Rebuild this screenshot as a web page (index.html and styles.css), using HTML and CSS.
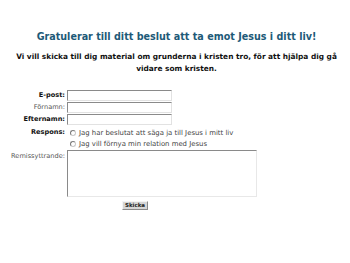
FILE: index.html
```html
<!DOCTYPE html>
<html>
<head>
<meta charset="utf-8">
<link rel="stylesheet" href="styles.css">
</head>
<body>
<div class="page">
  <h1 class="title">Gratulerar till ditt beslut att ta emot Jesus i ditt liv!</h1>
  <p class="intro">Vi vill skicka till dig material om grunderna i kristen tro, för att hjälpa dig gå vidare som kristen.</p>
  <form class="form">
    <label class="lbl bold">E-post:</label>
    <div class="ctl"><span class="field"></span></div>
    <label class="lbl">Förnamn:</label>
    <div class="ctl"><span class="field"></span></div>
    <label class="lbl bold">Efternamn:</label>
    <div class="ctl"><span class="field"></span></div>
    <label class="lbl bold resp">Respons:</label>
    <div class="ctl radios">
      <div class="radio-row"><span class="radio"></span><span>Jag har beslutat att säga ja till Jesus i mitt liv</span></div>
      <div class="radio-row"><span class="radio"></span><span>Jag vill förnya min relation med Jesus</span></div>
    </div>
    <label class="lbl rem">Remissyttrande:</label>
    <div class="ctl"><span class="area"></span></div>
    <div class="btn-row"><span class="btn">Skicka</span></div>
  </form>
</div>
</body>
</html>
```
FILE: styles.css
```css
html, body {
  margin: 0;
  padding: 0;
  background: #ffffff;
}
body {
  font-family: "DejaVu Sans", Verdana, sans-serif;
  color: #222;
}
.page {
  padding: 31px 8px 0 8px;
  width: 337px;
}
.title {
  margin: 0;
  font-size: 9.6px;
  font-weight: bold;
  color: #1d5a78;
  text-align: center;
  line-height: 12px;
}
.intro {
  margin: 8px 0 0 0;
  font-size: 7.4px;
  font-weight: bold;
  color: #111;
  text-align: center;
  line-height: 12px;
}
.form {
  margin-top: 15px;
  display: grid;
  grid-template-columns: 57px 190px;
  column-gap: 2px;
  row-gap: 1px;
  font-size: 6.6px;
}
.lbl {
  text-align: right;
  color: #555;
  line-height: 11px;
  white-space: nowrap;
}
.lbl.bold {
  font-weight: bold;
  color: #111;
}
.lbl.resp {
  padding-top: 1px;
}
.lbl.rem {
  padding-top: 1px;
}
.ctl {
  display: flex;
  flex-direction: column;
}
.field {
  display: block;
  width: 105px;
  height: 11px;
  box-sizing: border-box;
  border-top: 1px solid #8a8a8a;
  border-left: 1px solid #8a8a8a;
  border-right: 1px solid #e2e2e2;
  border-bottom: 1px solid #e2e2e2;
  background: #fff;
}
.radios {
  padding-top: 1px;
  padding-bottom: 0;
  color: #444;
  font-size: 6.9px;
}
.radio-row {
  display: flex;
  align-items: center;
  height: 11px;
  gap: 3px;
  padding-left: 3px;
  white-space: nowrap;
}
.radio {
  flex: none;
  width: 6px;
  height: 6px;
  box-sizing: border-box;
  border-radius: 50%;
  border: 1px solid #c8c8c8;
  border-top-color: #7a7a7a;
  border-left-color: #7a7a7a;
  background: #fff;
}
.area {
  display: block;
  width: 190px;
  height: 47px;
  box-sizing: border-box;
  border-top: 1px solid #8a8a8a;
  border-left: 1px solid #8a8a8a;
  border-right: 1px solid #e8e8e8;
  border-bottom: 1px solid #e8e8e8;
  background: #fff;
}
.btn-row {
  grid-column: 1 / span 2;
  display: flex;
  padding-left: 114px;
  padding-top: 3px;
}
.btn {
  display: block;
  width: 26px;
  height: 9px;
  box-sizing: border-box;
  background: #d6d6d6;
  border-top: 1px solid #f4f4f4;
  border-left: 1px solid #f4f4f4;
  border-right: 1px solid #8a8a8a;
  border-bottom: 1px solid #8a8a8a;
  font-size: 5.5px;
  font-weight: bold;
  color: #222;
  text-align: center;
  line-height: 7px;
}
```
